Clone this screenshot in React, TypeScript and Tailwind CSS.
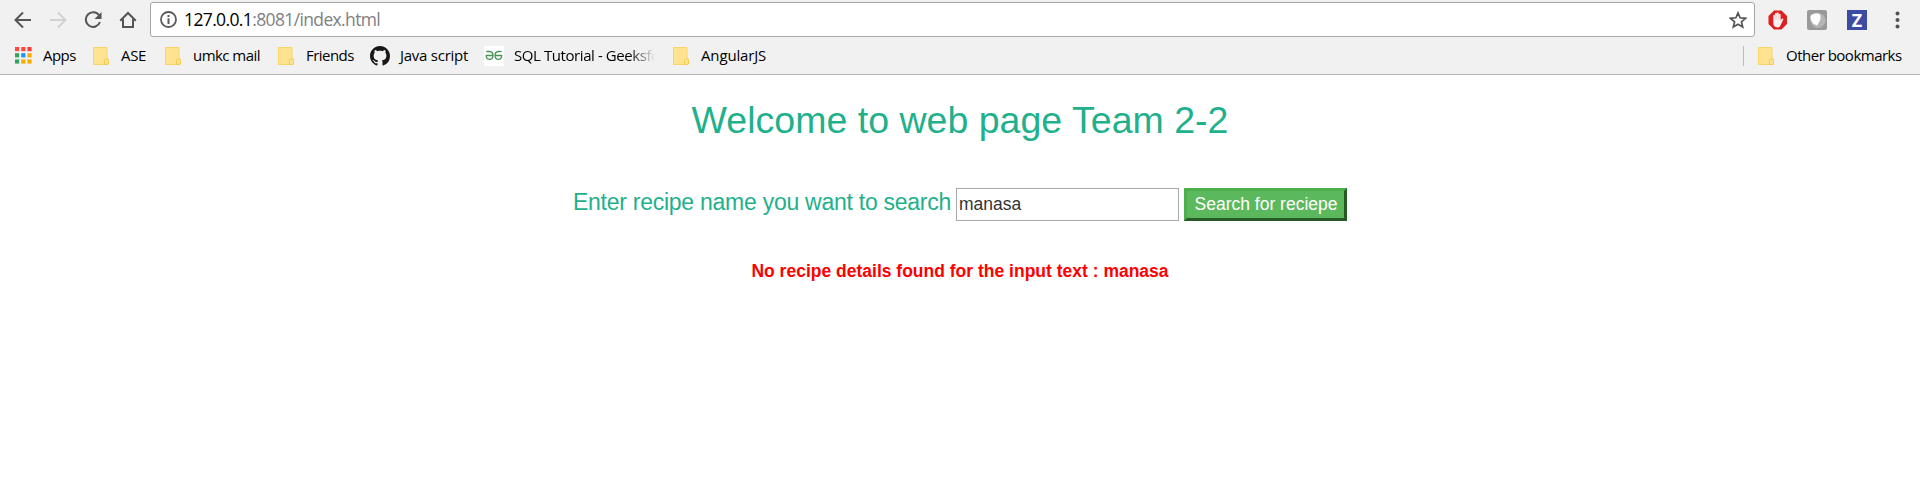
import React from "react";

const ui = "font-['Open_Sans','Noto_Sans',sans-serif]";

function Folder() {
  return (
    <svg className="h-[18px] w-4 shrink-0" viewBox="0 0 16 18">
      <path d="M0.5 0.5H14V12H15.5V16.5Q15.500 17.500 14.500 17.500H0.500Z" fill="#ffe391" stroke="#f8d569" />
      <path d="M11.500 17.500V13.500Q11.500 12 13 12H14.500Q15.500 12 15.500 13.500V16Q15.500 17.500 14 17.500Z" fill="#ffe391" stroke="#f3cc50" />
    </svg>
  );
}

function AppsGrid() {
  const colors = ["#ff4a3f", "#ff4a3f", "#ff3b3b", "#34a560", "#2390f5", "#fbab00", "#34a560", "#fbab00", "#fbab00"];
  return (
    <svg className="h-[17px] w-[17px] shrink-0" viewBox="0 0 17 17">
      {colors.map((c, i) => (
        <rect key={i} x={(i % 3) * 6.2} y={Math.floor(i / 3) * 6.2} width="4.200" height="4.200" fill={c} />
      ))}
    </svg>
  );
}

function GitHub() {
  return (
    <svg className="h-5 w-5 shrink-0" viewBox="0 0 16 16" fill="#181616">
      <path d="M8 0C3.58 0 0 3.58 0 8c0 3.54 2.29 6.53 5.47 7.59.4.07.55-.17.55-.38 0-.19-.01-.82-.01-1.49-2.01.37-2.53-.49-2.69-.94-.09-.23-.48-.94-.82-1.13-.28-.15-.68-.52-.01-.53.63-.01 1.08.58 1.23.82.72 1.21 1.87.87 2.33.66.07-.52.28-.87.51-1.07-1.78-.2-3.64-.89-3.64-3.95 0-.87.31-1.59.82-2.15-.08-.2-.36-1.02.08-2.12 0 0 .67-.21 2.2.82.64-.18 1.32-.27 2-.27s1.36.09 2 .27c1.53-1.04 2.2-.82 2.2-.82.44 1.1.16 1.92.08 2.12.51.56.82 1.27.82 2.15 0 3.07-1.87 3.75-3.65 3.95.29.25.54.73.54 1.48 0 1.07-.01 1.93-.01 2.2 0 .21.15.46.55.38A8.01 8.01 0 0 0 16 8c0-4.42-3.58-8-8-8z" />
    </svg>
  );
}

function Geeks() {
  return (
    <svg className="h-5 w-5 shrink-0 bg-white" viewBox="0 0 20 20" fill="none" stroke="#4a9455" strokeWidth="1.300">
      <path d="M2.300 5.500H5.500Q9 5.700 9 9.500Q9 13.300 5.500 13.300Q2.200 13.300 2.200 9.500H9" />
      <path d="M17.500 5.500H14.500Q11 5.700 11 9.500Q11 13.300 14.500 13.300Q17.600 13.300 17.700 9.500H11" />
    </svg>
  );
}

function Label({ w, children }: { w: string; children: React.ReactNode }) {
  return <span className={`block shrink-0 whitespace-nowrap pb-[2px] ${w}`}>{children}</span>;
}

function Toolbar() {
  return (
    <div className="flex h-[37px] items-start pt-[2px]">
      <div className="flex h-[36px] w-[150px] shrink-0 items-center gap-[17px] pl-[14px]">
        <svg className="h-[18px] w-[18px]" viewBox="0 0 18 18" fill="none" stroke="#555" strokeWidth="2"><path d="M17 9H2M9 1.500L1.500 9L9 16.500" /></svg>
        <svg className="h-[18px] w-[18px]" viewBox="0 0 18 18" fill="none" stroke="#d2d2d2" strokeWidth="2"><path d="M1 9H16M9 1.500L16.500 9L9 16.500" /></svg>
        <svg className="h-[18px] w-[18px]" viewBox="0 0 18 18"><path d="M15.200 4.500A7.300 7.300 0 1 0 16 11" fill="none" stroke="#555" strokeWidth="2" /><path d="M17.500 1V8H10.500Z" fill="#555" /></svg>
        <svg className="h-[18px] w-[18px]" viewBox="0 0 18 18" fill="none" stroke="#555" strokeWidth="2"><path d="M1.200 9.800L9 2L16.800 9.800M4 8V16H14V8" /></svg>
      </div>
      <div className="flex h-[35px] w-[1605px] shrink-0 items-center rounded-[3px] border border-[#a6a6a6] bg-white pl-[9px] pr-[7px]">
        <svg className="h-[17px] w-[17px]" viewBox="0 0 17 17" fill="none" stroke="#5a5a5a"><circle cx="8.500" cy="8.500" r="7.500" strokeWidth="1.800" /><path d="M8.500 7.300V13M8.500 4V6" strokeWidth="2" /></svg>
        <div className={`ml-[7px] pb-px text-[17.500px] leading-6 tracking-[-0.63px] text-[#808080] ${ui}`}><span className="text-black">127.0.0.1</span>:8081/index.html</div>
        <svg className="ml-auto h-[18px] w-[18px]" viewBox="0 0 18 18" fill="none" stroke="#555" strokeWidth="1.700"><path d="M9 1.900L11.100 6.800L16.500 7.300L12.400 10.800L13.700 16L9 13.200L4.300 16L5.600 10.800L1.500 7.300L6.900 6.800Z" /></svg>
      </div>
      <div className="flex h-[35px] flex-1 items-center pl-[13px]">
        <svg className="h-5 w-5" viewBox="0 0 20 20">
          <path d="M6 .5H13.500L19 6V14L13.500 19.500H6L.5 14V6Z" fill="#dd1f1f" />
          <path d="M5.300 9V5.300Q6.100 4.300 6.900 5.300V3.500Q7.900 2.500 8.800 3.500V2.800Q9.700 1.800 10.600 2.800V4Q11.800 3.200 12.600 4.200V10.200L14 8.500Q15.600 8.300 15.300 9.500L12.800 14.800Q12 17.500 9.500 17.500Q5.300 17 5.300 13Z" fill="#f7f1f1" />
          <path d="M7.200 5V9.500M9 4V9.500M10.900 4V9.500" stroke="#e9a5a5" strokeWidth=".5" />
        </svg>
        <svg className="ml-[19px] h-5 w-5" viewBox="0 0 20 20">
          <rect width="20" height="20" rx="2" fill="#999" /><circle cx="11" cy="10.500" r="7.500" fill="#b5b5b5" /><path d="M4 5Q9 2 13 4.500Q15 9 10 15.500Q5 14 3.500 9Q3 7 4 5Z" fill="#fff" />
        </svg>
        <div className="ml-[20px] flex h-5 w-5 items-center justify-center bg-[#3d4ba3] font-['Open_Sans',sans-serif] text-[18px] font-bold leading-5 text-white">Z</div>
        <svg className="ml-[28px] h-[18px] w-[5px]" viewBox="0 0 5 18" fill="#555"><circle cx="2.500" cy="2.500" r="2" /><circle cx="2.500" cy="9" r="2" /><circle cx="2.500" cy="15.500" r="2" /></svg>
      </div>
    </div>
  );
}

function Bookmarks() {
  return (
    <div className={`flex h-[37px] items-center pl-[15px] text-[15px] leading-5 text-black ${ui}`}>
      <AppsGrid />
      <div className="ml-[11px]"><Label w="w-[50px] tracking-[-0.55px]">Apps</Label></div>
      <Folder />
      <div className="ml-3"><Label w="w-[44px] tracking-[-0.3px]">ASE</Label></div>
      <Folder />
      <div className="ml-3"><Label w="w-[85px] tracking-[-0.55px]">umkc mail</Label></div>
      <Folder />
      <div className="ml-[12px]"><Label w="w-[64px] tracking-[-0.55px]">Friends</Label></div>
      <GitHub />
      <div className="ml-[10px]"><Label w="w-[84px] tracking-[-0.25px]">Java script</Label></div>
      <Geeks />
      <div className="ml-[10px] w-[159px] pb-[2px]">
        <div className="w-[144px] whitespace-nowrap bg-linear-to-r from-black from-80% to-transparent to-98% bg-clip-text tracking-[-0.42px] text-transparent">SQL Tutorial - Geeksfo</div>
      </div>
      <Folder />
      <div className="ml-3"><Label w="w-[80px] tracking-[-0.15px]">AngularJS</Label></div>
      <div className="ml-auto flex items-center pr-[18px]">
        <div className="mr-[14px] h-5 w-px bg-[#bcbcbc]" />
        <Folder />
        <div className="ml-3"><Label w="w-[116px] tracking-[-0.5px]">Other bookmarks</Label></div>
      </div>
    </div>
  );
}

export default function App() {
  return (
    <div className="h-[491px] w-[1920px] overflow-hidden bg-white">
      <header className="h-[75px] border-b border-[#b3b3b3] bg-[#f1f1f1]">
        <Toolbar />
        <Bookmarks />
      </header>
      <main className="flex flex-col items-center pt-[25px] font-['Liberation_Sans',sans-serif]">
        <h1 className="text-[37.500px] leading-[41px] tracking-[0.02px] text-[#1fb08c]">Welcome to web page Team 2-2</h1>
        <div className="mt-[47px] flex h-[33px] w-[774px] items-start">
          <label className="w-[383px] shrink-0 whitespace-nowrap pt-[2px] text-[23px] leading-[25px] tracking-[-0.26px] text-[#1fb08c]">Enter recipe name you want to search</label>
          <input className="h-[33px] w-[223px] border border-[#a9a9a9] bg-white px-[2px] text-[17.500px] text-[#333] outline-none" defaultValue="manasa" />
          <button className="ml-[5px] h-[33px] w-[163px] whitespace-nowrap border-[3px] border-t-[#4cae4c] border-r-[#275a27] border-b-[#275a27] border-l-[#4cae4c] bg-[#5cb85c] pl-px text-[17.500px] leading-[25px] text-white">Search for reciepe</button>
        </div>
        <p className="mt-[38px] text-[17.500px] font-bold leading-[25px] text-[#f00]">No recipe details found for the input text : manasa</p>
      </main>
    </div>
  );
}
